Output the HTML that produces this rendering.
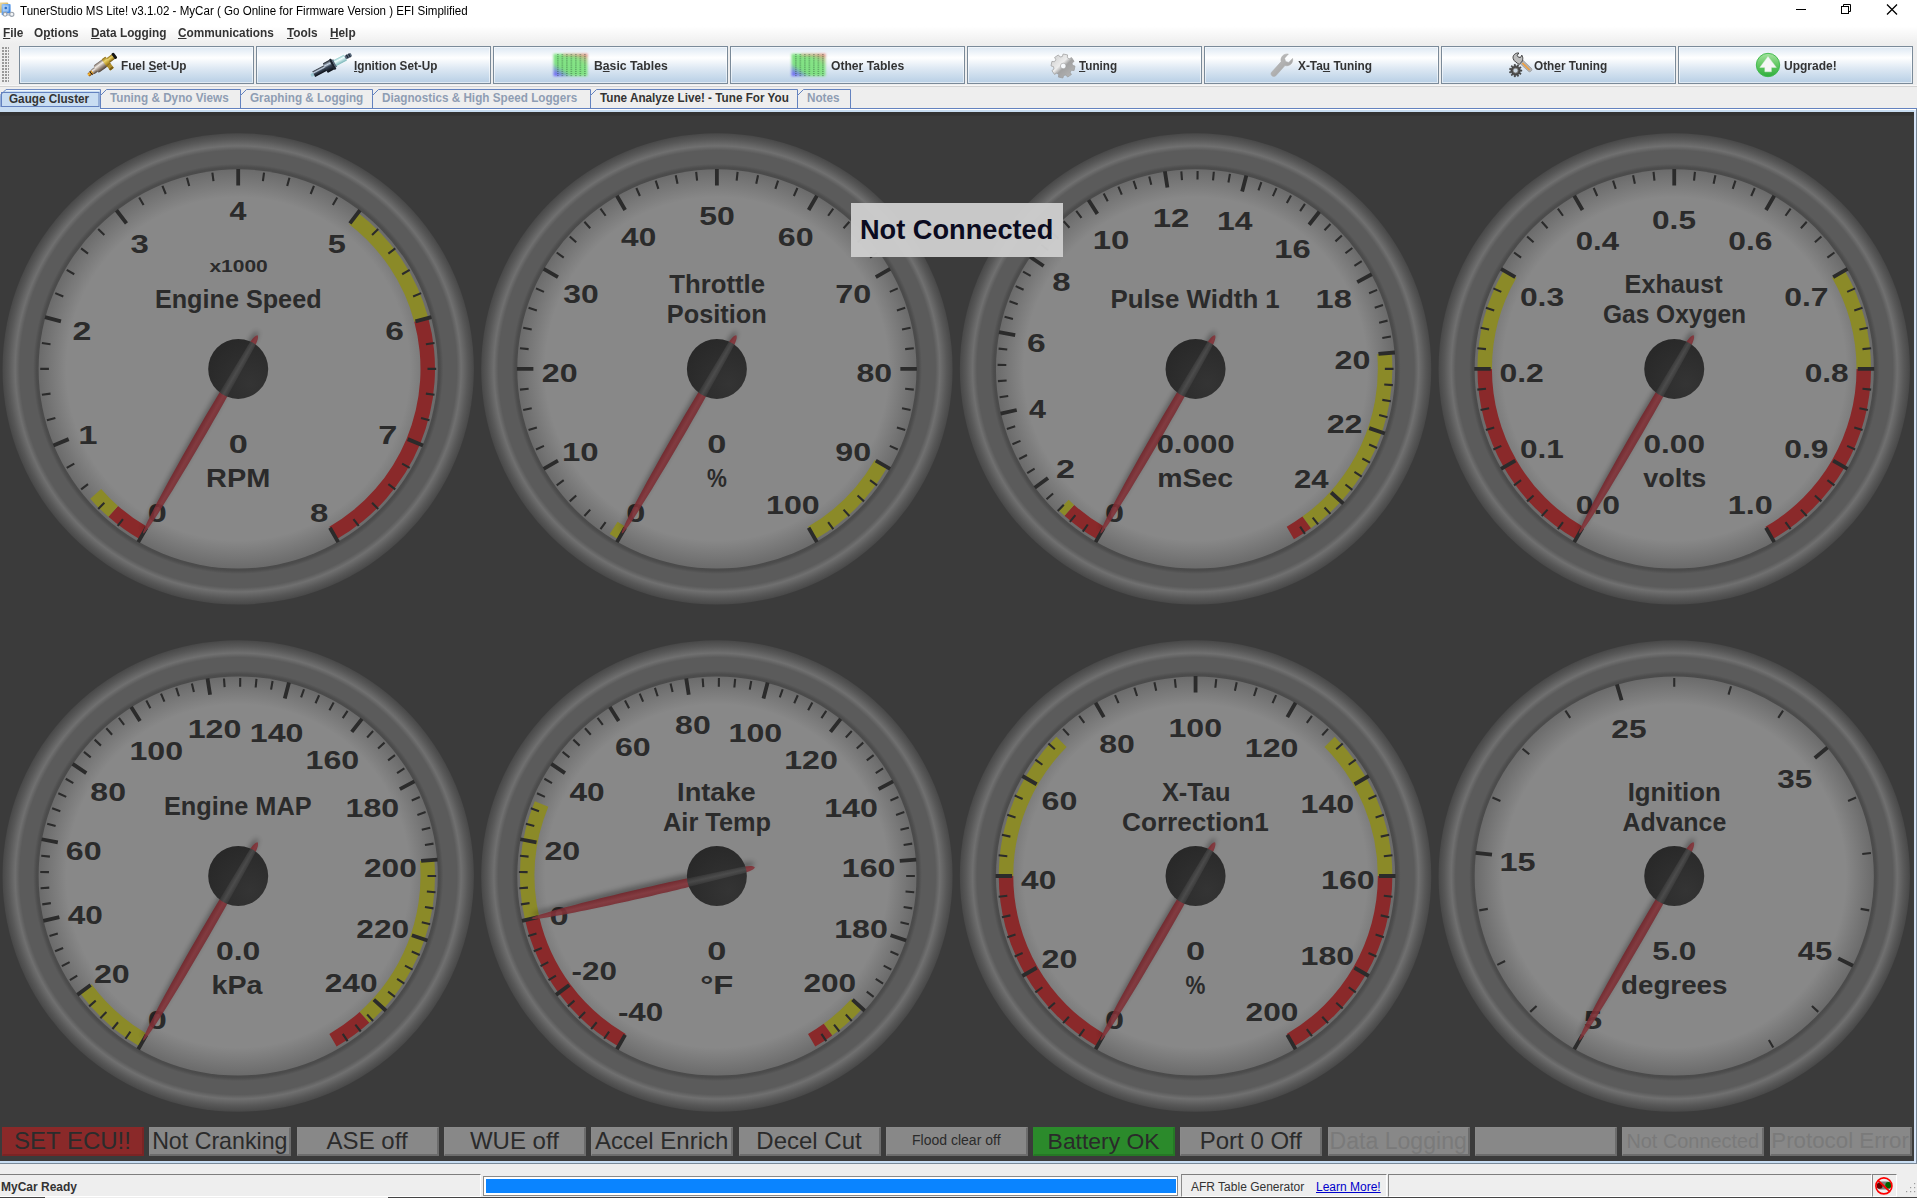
<!DOCTYPE html><html><head><meta charset="utf-8"><title>TunerStudio MS Lite!</title><style>
*{box-sizing:border-box;margin:0;padding:0}
html,body{width:1917px;height:1198px;overflow:hidden;background:#eeeeee;font-family:"Liberation Sans", sans-serif;}
body{position:relative}
.abs{position:absolute}
#titlebar{left:0;top:0;width:1917px;height:22px;background:#fff}
#title{left:20px;top:4.3px;font-size:12.3px;color:#000;white-space:nowrap;transform:scaleX(.9407);transform-origin:0 0}
#menubar{left:0;top:22px;width:1917px;height:22px;background:linear-gradient(#ffffff,#ffffff 20%,#eeeeee)}
.menu{top:26px;font-size:12px;font-weight:bold;color:#333;white-space:nowrap;transform:scaleX(.985);transform-origin:0 0}
.menu u{text-decoration:underline}
.tbtn{top:46px;height:38px;width:235px;border:1px solid #7a8a99;background:linear-gradient(#dde8f3 0%,#ffffff 30%,#dde8f3 60%,#b8cfe5 100%);box-shadow:inset 0 0 0 1px rgba(255,255,255,.55)}
.tbtn span{position:absolute;top:12px;font-size:12px;font-weight:bold;color:#333;white-space:nowrap;transform:scaleX(.972);transform-origin:0 0}
.tab{top:90px;height:18px;font-size:12px;font-weight:bold;color:#8e9db3;white-space:nowrap}
.tab span{position:absolute;top:1px}
#panel{left:0;top:112px;width:1914px;height:1048.7px;background:#3b3b3b;overflow:hidden;box-shadow:inset 0 3.5px 0 #333}
.ind{top:1127px;height:29px;width:142px;background:#888888;border-top:1px solid #8a8a8a;border-left:1px solid #8a8a8a;border-right:2px solid #6c6c6c;border-bottom:2px solid #6c6c6c;color:#2b2b2b;font-size:24px;text-align:center;white-space:nowrap;line-height:25px;overflow:hidden}
.ind.dis{color:#7a7a7a}
.sb{top:1174.2px;height:22.8px;border:1px solid;border-top-width:1.3px;border-color:#7e7e7e #fff #fff #8a8a8a;font-size:12px;color:#333;white-space:nowrap}
</style></head><body>
<div id="titlebar" class="abs"></div>
<svg class="abs" style="left:0;top:0" width="18" height="20" viewBox="0 0 18 20">
<defs><linearGradient id="fold" x1="0" y1="0" x2="1" y2="1"><stop offset="0" stop-color="#f0dca0"/><stop offset="1" stop-color="#c39a40"/></linearGradient>
<linearGradient id="docg" x1="0" y1="0" x2="1" y2="1"><stop offset="0" stop-color="#9cc6f6"/><stop offset=".5" stop-color="#5a9ae8"/><stop offset="1" stop-color="#2f78d8"/></linearGradient>
<filter id="ib" x="-20%" y="-20%" width="140%" height="140%"><feGaussianBlur stdDeviation=".35"/></filter></defs>
<g filter="url(#ib)"><rect x="-1" y="2.4" width="9.2" height="10.4" rx="1" fill="url(#fold)"/>
<rect x="1.6" y="4" width="9" height="11.2" rx="1" fill="url(#docg)"/>
<rect x="2.8" y="5.4" width="5.8" height="6.2" fill="#b4d4f8" opacity=".75"/>
<circle cx="5.8" cy="8" r="1.3" fill="#2a6cc4"/>
<rect x="6" y="13.1" width="5" height="2.4" fill="#c8ccd2"/>
<circle cx="5.1" cy="14.3" r="1.9" fill="#f4f6f8" stroke="#9aa2ac" stroke-width="1.1"/>
<circle cx="11.8" cy="14.3" r="2.1" fill="#f4f6f8" stroke="#9aa2ac" stroke-width="1.1"/></g></svg>
<div id="title" class="abs">TunerStudio MS Lite! v3.1.02 - MyCar ( Go Online for Firmware Version ) EFI Simplified</div>
<svg class="abs" style="left:1780px;top:0" width="137" height="22" viewBox="0 0 137 22" fill="none" stroke="#000" stroke-width="1">
<path d="M16,9.5H26"/><rect x="61.5" y="6.5" width="7" height="7"/><path d="M63.5,6.5V4.5H70.5V11.5H68.5"/>
<path d="M107,4.5L117,14.5M117,4.5L107,14.5" stroke-width="1.25"/></svg>
<div id="menubar" class="abs"></div>
<div class="abs menu" style="left:3px"><u>F</u>ile</div>
<div class="abs menu" style="left:34px">O<u>p</u>tions</div>
<div class="abs menu" style="left:91px"><u>D</u>ata Logging</div>
<div class="abs menu" style="left:178px"><u>C</u>ommunications</div>
<div class="abs menu" style="left:287px"><u>T</u>ools</div>
<div class="abs menu" style="left:330px"><u>H</u>elp</div>
<div class="abs" style="left:2px;top:47px;width:7px;height:36px;background-image:radial-gradient(circle at 1px 1px,#9a9a9a 0.8px,transparent 1px);background-size:3px 3px"></div>
<div class="abs tbtn" style="left:19px"><span style="left:101.44px;transform:scaleX(0.9801)">Fuel <u>S</u>et-Up</span><svg class="abs" style="left:64.9px;top:5px" width="36" height="28" viewBox="0 0 36 28">
<defs><linearGradient id="fsil" x1="0" y1="0" x2="0" y2="1"><stop offset="0" stop-color="#6e625a"/><stop offset=".3" stop-color="#f2ece6"/><stop offset=".6" stop-color="#a89a8e"/><stop offset="1" stop-color="#4a3e36"/></linearGradient>
<linearGradient id="fbra" x1="0" y1="0" x2="0" y2="1"><stop offset="0" stop-color="#8a6a14"/><stop offset=".35" stop-color="#ecd46a"/><stop offset=".7" stop-color="#b8962a"/><stop offset="1" stop-color="#6a4e10"/></linearGradient>
<linearGradient id="ftip" x1="0" y1="0" x2="0" y2="1"><stop offset="0" stop-color="#a85a08"/><stop offset=".4" stop-color="#ffc030"/><stop offset="1" stop-color="#7a3a04"/></linearGradient></defs>
<g transform="translate(3.2 23.2) rotate(-36.5)">
<rect x="0" y="-1.9" width="3.2" height="3.8" rx="1.2" fill="url(#ftip)"/>
<rect x="3" y="-2.3" width="1.3" height="4.6" fill="#2a1a08"/>
<rect x="4.2" y="-2.2" width="1.4" height="4.4" fill="url(#ftip)"/>
<rect x="5.5" y="-2.8" width="5" height="5.6" rx=".8" fill="url(#fsil)"/>
<rect x="9.5" y="-4.5" width="11.5" height="9" rx="1.8" fill="url(#fsil)"/>
<rect x="20" y="-4.8" width="5" height="9.6" rx=".8" fill="url(#fbra)"/>
<rect x="20.4" y="3.8" width="4.6" height="5.6" rx=".8" fill="#b08e2c"/>
<rect x="20.4" y="7.4" width="4.6" height="2" rx=".8" fill="#7a5e16"/>
<rect x="24.8" y="-2.8" width="6.6" height="5.6" fill="url(#fbra)"/>
<rect x="31" y="-3.4" width="3" height="6.8" rx="1.2" fill="#161616"/>
</g></svg></div>
<div class="abs tbtn" style="left:256px"><span style="left:97.34px;transform:scaleX(0.9767)"><u>I</u>gnition Set-Up</span><svg class="abs" style="left:50.80000000000001px;top:5px" width="46" height="28" viewBox="0 0 46 28">
<defs><linearGradient id="sst" x1="0" y1="0" x2="0" y2="1"><stop offset="0" stop-color="#10161e"/><stop offset=".3" stop-color="#c8d6e6"/><stop offset=".5" stop-color="#3a4656"/><stop offset="1" stop-color="#080c12"/></linearGradient>
<linearGradient id="scer" x1="0" y1="0" x2="0" y2="1"><stop offset="0" stop-color="#8ec8c8"/><stop offset=".35" stop-color="#f0ffff"/><stop offset="1" stop-color="#7ab6b8"/></linearGradient></defs>
<g transform="translate(3.0 23.6) rotate(-27.7) scale(1.03 1)">
<rect x="0" y="-1.6" width="3.5" height="3.2" rx="1" fill="#9cc8d2"/>
<rect x="3" y="-3.1" width="13.5" height="6.2" fill="url(#sst)"/>
<rect x="15.5" y="-5.4" width="7.5" height="10.8" rx="1" fill="url(#sst)"/>
<rect x="22.6" y="-6" width="2.4" height="12" rx="1" fill="#1a222c"/>
<rect x="24.6" y="-4.2" width="2" height="8.4" fill="#5a6a7a"/>
<rect x="26.2" y="-3.2" width="11.5" height="6.4" fill="url(#scer)"/>
<rect x="37.4" y="-2" width="6.8" height="4" rx="1" fill="#58687a"/>
<rect x="39.2" y="-2" width="1.1" height="4" fill="#1c2430"/><rect x="41.6" y="-2" width="1.1" height="4" fill="#1c2430"/>
</g></svg></div>
<div class="abs tbtn" style="left:493px"><span style="left:99.51px;transform:scaleX(1.0166)">B<u>a</u>sic Tables</span><svg class="abs" style="left:55.40px;top:2.2px" width="42" height="30" viewBox="0 0 42 30">
<defs><linearGradient id="tga1" x1="0" y1="1" x2="1" y2="0"><stop offset="0" stop-color="#6a68f6"/><stop offset=".09" stop-color="#7674f2"/><stop offset=".3" stop-color="#7fe083"/><stop offset=".7" stop-color="#86e486"/><stop offset=".86" stop-color="#b0c88a"/><stop offset="1" stop-color="#f08484"/></linearGradient>
<linearGradient id="tgb1" x1="0" y1="0" x2="0" y2="1"><stop offset="0" stop-color="#e88a80" stop-opacity=".7"/><stop offset=".16" stop-color="#e88a80" stop-opacity="0"/></linearGradient>
<linearGradient id="tgc1" x1="0" y1="0" x2="1" y2="0"><stop offset="0" stop-color="#fff" stop-opacity="1"/><stop offset=".5" stop-color="#fff" stop-opacity="0"/></linearGradient>
<filter id="tbl1" x="-20%" y="-20%" width="140%" height="140%"><feGaussianBlur stdDeviation="1.2"/></filter></defs>
<g filter="url(#tbl1)"><rect x="4.5" y="4.8" width="34" height="22.4" fill="url(#tga1)"/><rect x="14" y="4.8" width="24.5" height="22.4" fill="url(#tgb1)"/></g><path d="M8.0,5.6h1.7M8.0,7.7h1.7M8.0,9.8h1.7M8.0,11.9h1.7M8.0,14.0h1.7M8.0,16.1h1.7M8.0,18.2h1.7M8.0,20.3h1.7M8.0,22.4h1.7M8.0,24.5h1.7M8.0,26.6h1.7M12.5,5.6h1.7M12.5,7.7h1.7M12.5,9.8h1.7M12.5,11.9h1.7M12.5,14.0h1.7M12.5,16.1h1.7M12.5,18.2h1.7M12.5,20.3h1.7M12.5,22.4h1.7M12.5,24.5h1.7M12.5,26.6h1.7M17.0,5.6h1.7M17.0,7.7h1.7M17.0,9.8h1.7M17.0,11.9h1.7M17.0,14.0h1.7M17.0,16.1h1.7M17.0,18.2h1.7M17.0,20.3h1.7M17.0,22.4h1.7M17.0,24.5h1.7M17.0,26.6h1.7M21.5,5.6h1.7M21.5,7.7h1.7M21.5,9.8h1.7M21.5,11.9h1.7M21.5,14.0h1.7M21.5,16.1h1.7M21.5,18.2h1.7M21.5,20.3h1.7M21.5,22.4h1.7M21.5,24.5h1.7M21.5,26.6h1.7M26.0,5.6h1.7M26.0,7.7h1.7M26.0,9.8h1.7M26.0,11.9h1.7M26.0,14.0h1.7M26.0,16.1h1.7M26.0,18.2h1.7M26.0,20.3h1.7M26.0,22.4h1.7M26.0,24.5h1.7M26.0,26.6h1.7M30.5,5.6h1.7M30.5,7.7h1.7M30.5,9.8h1.7M30.5,11.9h1.7M30.5,14.0h1.7M30.5,16.1h1.7M30.5,18.2h1.7M30.5,20.3h1.7M30.5,22.4h1.7M30.5,24.5h1.7M30.5,26.6h1.7M35.0,5.6h1.7M35.0,7.7h1.7M35.0,9.8h1.7M35.0,11.9h1.7M35.0,14.0h1.7M35.0,16.1h1.7M35.0,18.2h1.7M35.0,20.3h1.7M35.0,22.4h1.7M35.0,24.5h1.7M35.0,26.6h1.7" stroke="#20402c" stroke-width=".8" opacity=".5"/></svg></div>
<div class="abs tbtn" style="left:730px"><span style="left:100.07px;transform:scaleX(1.0095)">Othe<u>r</u> Tables</span><svg class="abs" style="left:55.65px;top:2.2px" width="42" height="30" viewBox="0 0 42 30">
<defs><linearGradient id="tga2" x1="0" y1="1" x2="1" y2="0"><stop offset="0" stop-color="#6a68f6"/><stop offset=".09" stop-color="#7674f2"/><stop offset=".3" stop-color="#7fe083"/><stop offset=".7" stop-color="#86e486"/><stop offset=".86" stop-color="#b0c88a"/><stop offset="1" stop-color="#f08484"/></linearGradient>
<linearGradient id="tgb2" x1="0" y1="0" x2="0" y2="1"><stop offset="0" stop-color="#e88a80" stop-opacity=".7"/><stop offset=".16" stop-color="#e88a80" stop-opacity="0"/></linearGradient>
<linearGradient id="tgc2" x1="0" y1="0" x2="1" y2="0"><stop offset="0" stop-color="#fff" stop-opacity="1"/><stop offset=".5" stop-color="#fff" stop-opacity="0"/></linearGradient>
<filter id="tbl2" x="-20%" y="-20%" width="140%" height="140%"><feGaussianBlur stdDeviation="1.2"/></filter></defs>
<g filter="url(#tbl2)"><rect x="4.5" y="4.8" width="34" height="22.4" fill="url(#tga2)"/><rect x="14" y="4.8" width="24.5" height="22.4" fill="url(#tgb2)"/></g><path d="M8.0,5.6h1.7M8.0,7.7h1.7M8.0,9.8h1.7M8.0,11.9h1.7M8.0,14.0h1.7M8.0,16.1h1.7M8.0,18.2h1.7M8.0,20.3h1.7M8.0,22.4h1.7M8.0,24.5h1.7M8.0,26.6h1.7M12.5,5.6h1.7M12.5,7.7h1.7M12.5,9.8h1.7M12.5,11.9h1.7M12.5,14.0h1.7M12.5,16.1h1.7M12.5,18.2h1.7M12.5,20.3h1.7M12.5,22.4h1.7M12.5,24.5h1.7M12.5,26.6h1.7M17.0,5.6h1.7M17.0,7.7h1.7M17.0,9.8h1.7M17.0,11.9h1.7M17.0,14.0h1.7M17.0,16.1h1.7M17.0,18.2h1.7M17.0,20.3h1.7M17.0,22.4h1.7M17.0,24.5h1.7M17.0,26.6h1.7M21.5,5.6h1.7M21.5,7.7h1.7M21.5,9.8h1.7M21.5,11.9h1.7M21.5,14.0h1.7M21.5,16.1h1.7M21.5,18.2h1.7M21.5,20.3h1.7M21.5,22.4h1.7M21.5,24.5h1.7M21.5,26.6h1.7M26.0,5.6h1.7M26.0,7.7h1.7M26.0,9.8h1.7M26.0,11.9h1.7M26.0,14.0h1.7M26.0,16.1h1.7M26.0,18.2h1.7M26.0,20.3h1.7M26.0,22.4h1.7M26.0,24.5h1.7M26.0,26.6h1.7M30.5,5.6h1.7M30.5,7.7h1.7M30.5,9.8h1.7M30.5,11.9h1.7M30.5,14.0h1.7M30.5,16.1h1.7M30.5,18.2h1.7M30.5,20.3h1.7M30.5,22.4h1.7M30.5,24.5h1.7M30.5,26.6h1.7M35.0,5.6h1.7M35.0,7.7h1.7M35.0,9.8h1.7M35.0,11.9h1.7M35.0,14.0h1.7M35.0,16.1h1.7M35.0,18.2h1.7M35.0,20.3h1.7M35.0,22.4h1.7M35.0,24.5h1.7M35.0,26.6h1.7" stroke="#20402c" stroke-width=".8" opacity=".5"/></svg></div>
<div class="abs tbtn" style="left:967px"><span style="left:111.08px;transform:scaleX(0.9722)"><u>T</u>uning</span><svg class="abs" style="left:81.50000000000009px;top:5.5px" width="26" height="26" viewBox="0 0 26 26"><defs><linearGradient id="gg" x1="0" y1="0" x2="1" y2="1"><stop offset="0" stop-color="#c9c9c9"/><stop offset=".42" stop-color="#ececec"/><stop offset=".55" stop-color="#a2a2a2"/><stop offset="1" stop-color="#b9b9b9"/></linearGradient></defs>
<polygon points="22.48,12.34 25.00,13.12 24.10,17.56 21.47,17.30 20.17,19.23 21.40,21.57 17.62,24.07 15.95,22.03 13.66,22.48 12.88,25.00 8.44,24.10 8.70,21.47 6.77,20.17 4.43,21.40 1.93,17.62 3.97,15.95 3.52,13.66 1.00,12.88 1.90,8.44 4.53,8.70 5.83,6.77 4.60,4.43 8.38,1.93 10.05,3.97 12.34,3.52 13.12,1.00 17.56,1.90 17.30,4.53 19.23,5.83 21.57,4.60 24.07,8.38 22.03,10.05" fill="url(#gg)" stroke="#9a9a9a" stroke-width=".7" stroke-linejoin="round"/><circle cx="13.2" cy="13" r="2.8" fill="#f6f9fc" stroke="#9c9c9c" stroke-width=".6"/></svg></div>
<div class="abs tbtn" style="left:1204px"><span style="left:93.28px;transform:scaleX(0.9895)">X-Ta<u>u</u> Tuning</span><svg class="abs" style="left:64.10px;top:4.6px" width="26" height="26" viewBox="0 0 26 26"><defs><linearGradient id="wg" x1="0" y1="0" x2="1" y2="1"><stop offset="0" stop-color="#c4c4c4"/><stop offset="1" stop-color="#9c9c9c"/></linearGradient></defs>
<path d="M2.6,20.2 L12.2,9.6 C11,5.6 14.2,1.4 19.4,2 L15.6,6.2 L16.6,9.6 L19.8,10.4 L23.6,6.4 C24.6,11 20.6,14.8 16,13.6 L6.8,23.8 C4.2,26 0.6,22.8 2.6,20.2 Z" fill="url(#wg)" stroke="#a8a8a8" stroke-width=".5"/></svg></div>
<div class="abs tbtn" style="left:1441px"><span style="left:92.03px;transform:scaleX(0.9844)">Oth<u>e</u>r Tuning</span><svg class="abs" style="left:67.00px;top:5.2px" width="26" height="26" viewBox="0 0 26 26">
<path d="M10.6,11.2 L13.8,8 L22.6,16.6 C23.8,18 21.2,20.6 19.8,19.6 Z" fill="#b4b4b4" stroke="#8e8e8e" stroke-width=".6"/>
<path d="M13.4,11 L20.6,18" stroke="#f0a040" stroke-width="1.7" fill="none"/>
<path d="M4.2,6.6 C3.2,3.4 6.6,0.6 9.8,1 L8.2,3.4 L9.4,5.2 L11.6,5.4 L12.8,3.2 C14.8,6 13.4,9.8 11.8,10.8 L10.2,12.4 C8,11 5,9.4 4.2,6.6Z" fill="#bdbdbd" stroke="#3a3a3a" stroke-width="1"/>
<polygon points="11.14,17.87 12.87,17.97 12.87,19.23 11.14,19.33 10.82,20.44 12.21,21.46 11.53,22.52 10.02,21.67 9.15,22.43 9.78,24.04 8.63,24.56 7.82,23.04 6.68,23.20 6.33,24.89 5.09,24.72 5.23,22.99 4.18,22.51 2.97,23.75 2.02,22.93 3.07,21.55 2.45,20.58 0.76,20.97 0.41,19.76 2.04,19.18 2.04,18.02 0.41,17.44 0.76,16.23 2.45,16.62 3.07,15.65 2.02,14.27 2.97,13.45 4.18,14.69 5.23,14.21 5.09,12.48 6.33,12.31 6.68,14.00 7.82,14.16 8.63,12.64 9.78,13.16 9.15,14.77 10.02,15.53 11.53,14.68 12.21,15.74 10.82,16.76" fill="#4a4a4a" stroke="#2c2c2c" stroke-width=".5"/><circle cx="6.6" cy="18.6" r="2.4" fill="#c9d6e2" stroke="#8a8a8a" stroke-width=".8"/></svg></div>
<div class="abs tbtn" style="left:1678px"><span style="left:104.78px;transform:scaleX(0.9996)">Upgrade!</span><svg class="abs" style="left:76.00px;top:5.2px" width="26" height="26" viewBox="0 0 26 26"><defs><linearGradient id="ug" x1="0" y1="0" x2="0" y2="1"><stop offset="0" stop-color="#a6e3a0"/><stop offset=".5" stop-color="#62c862"/><stop offset="1" stop-color="#2fae3c"/></linearGradient></defs>
<circle cx="13" cy="13" r="11.7" fill="url(#ug)" stroke="#3cb84a" stroke-width=".9"/><path d="M13,4.4 L21.4,15.4 L16.4,15.4 L16.4,19.8 L9.8,19.8 L9.8,15.4 L4.8,15.4Z" fill="#f6f6f6" stroke="#e0eee0" stroke-width=".4"/></svg></div>
<div class="abs" style="left:0;top:85px;width:1917px;height:1px;background:#f7f7f7"></div><div class="abs" style="left:0;top:86px;width:1917px;height:1px;background:#d2d2d2"></div>
<svg class="abs" style="left:0;top:86px" width="1917" height="26" viewBox="0 0 1917 26"><style>.tt{font-family:"Liberation Sans",sans-serif;font-weight:bold;font-size:12px}</style><path d="M0.0,22.5 L0.0,9.5 L6.0,3.5 L100.5,3.5 L100.5,22.5" fill="#c8ddf2" stroke="#6382bf" stroke-width="1"/><path d="M6.0,4.4 L99.5,4.4" stroke="#fff" stroke-width="0.8" fill="none"/><rect x="1.5" y="6.5" width="97.5" height="14.0" fill="none" stroke="#6382bf" stroke-width="1"/><text transform="translate(9.0 17) scale(.977 1)" class="tt" fill="#333">Gauge Cluster</text><path d="M100.5,22.5 L100.5,9.5 L106.5,3.5 L240.5,3.5 L240.5,22.5" fill="#eeeeee" stroke="#6382bf" stroke-width="1"/><text transform="translate(110 16) scale(.977 1)" class="tt" fill="#8e9db3">Tuning &amp; Dyno Views</text><path d="M240.5,22.5 L240.5,9.5 L246.5,3.5 L372.5,3.5 L372.5,22.5" fill="#eeeeee" stroke="#6382bf" stroke-width="1"/><text transform="translate(250 16) scale(.977 1)" class="tt" fill="#8e9db3">Graphing &amp; Logging</text><path d="M372.5,22.5 L372.5,9.5 L378.5,3.5 L590.5,3.5 L590.5,22.5" fill="#eeeeee" stroke="#6382bf" stroke-width="1"/><text transform="translate(382 16) scale(.977 1)" class="tt" fill="#8e9db3">Diagnostics &amp; High Speed Loggers</text><path d="M590.5,22.5 L590.5,9.5 L596.5,3.5 L797.5,3.5 L797.5,22.5" fill="#eeeeee" stroke="#6382bf" stroke-width="1"/><text transform="translate(600 16) scale(.977 1)" class="tt" fill="#333">Tune Analyze Live! - Tune For You</text><path d="M797.5,22.5 L797.5,9.5 L803.5,3.5 L850.5,3.5 L850.5,22.5" fill="#eeeeee" stroke="#6382bf" stroke-width="1"/><text transform="translate(807 16) scale(.977 1)" class="tt" fill="#8e9db3">Notes</text></svg>
<div class="abs" style="left:0;top:108px;width:1917px;height:56px;background:#c8ddf2;border-top:1px solid #6382bf"></div>
<div class="abs" style="left:0;top:109px;width:1916px;height:1px;background:#fff"></div>
<div class="abs" style="left:0;top:107px;width:100px;height:3px;background:#c8ddf2"></div>
<div class="abs" style="left:0;top:1160px;width:1917px;height:3px;background:#c8ddf2"></div>
<div class="abs" style="left:0;top:1163px;width:1917px;height:1px;background:#7a8a99"></div>
<div class="abs" style="left:1914px;top:110px;width:2px;height:1053px;background:#d8e7fb"></div>
<div class="abs" style="left:1916px;top:109px;width:1px;height:1055px;background:#7a8a99"></div>
<div id="panel" class="abs"><svg id="gsvg" width="1914" height="1048" viewBox="0 0 1914 1048" style="position:absolute;left:0;top:0">
<style>
 #gsvg text{font-family:"Liberation Sans", sans-serif;font-weight:bold;fill:#2b2b2b;text-anchor:middle}
</style>

<defs>
<radialGradient id="bezel" cx="50%" cy="50%" r="50%">
 <stop offset="0" stop-color="#4a4a4a"/>
 <stop offset="0.846" stop-color="#4a4a4a"/>
 <stop offset="0.856" stop-color="#4c4c4c"/>
 <stop offset="0.870" stop-color="#5b5b5b"/>
 <stop offset="0.927" stop-color="#5b5b5b"/>
 <stop offset="0.946" stop-color="#707070"/>
 <stop offset="0.975" stop-color="#585858"/>
 <stop offset="1" stop-color="#484848"/>
</radialGradient>
<radialGradient id="face" cx="50%" cy="50%" r="50%">
 <stop offset="0" stop-color="#888888"/>
 <stop offset="0.86" stop-color="#888888"/>
 <stop offset="1" stop-color="#6b6b6b"/>
</radialGradient>
<radialGradient id="hub" cx="70%" cy="75%" r="90%">
 <stop offset="0" stop-color="#343434"/>
 <stop offset="1" stop-color="#272727"/>
</radialGradient>
<linearGradient id="ngrad" x1="0" y1="0" x2="0" y2="1">
 <stop offset="0" stop-color="#782a30"/>
 <stop offset="0.45" stop-color="#86353b"/>
 <stop offset="1" stop-color="#74242a"/>
</linearGradient>
<linearGradient id="nhl" x1="0" y1="0" x2="0" y2="1">
 <stop offset="0" stop-color="#fff" stop-opacity="0.04"/>
 <stop offset="0.5" stop-color="#fff" stop-opacity="0.14"/>
 <stop offset="1" stop-color="#fff" stop-opacity="0.04"/>
</linearGradient>
<filter id="blur" x="-20%" y="-200%" width="140%" height="500%"><feGaussianBlur stdDeviation="2.8"/></filter>
<clipPath id="hubclip"><circle cx="0" cy="0" r="30"/></clipPath>
<path id="needle" d="M-39,0 C-37,-2.8 -31,-3.2 -20,-3.4 L30,-4.4 C70,-5.4 190,-4.4 190,0 C190,4.4 70,5.4 30,4.4 L-20,3.4 C-31,3.2 -37,2.8 -39,0Z"/>
<circle id="facebg" cx="0" cy="0" r="199.6" fill="url(#face)"/>
</defs>

<g>
<circle cx="238.20" cy="256.90" r="235.7" fill="url(#bezel)" transform="translate(238.20 256.90) scale(1) translate(-238.20 -256.90)"/>
<use href="#facebg" x="238.20" y="256.90"/>
<path d="M139.80,427.33 A196.8,196.8 0 0 1 108.44,404.86 L118.00,393.96 A182.3,182.3 0 0 0 147.05,414.78 Z" fill="#8a292a"/>
<path d="M108.44,404.86 A196.8,196.8 0 0 1 90.24,386.66 L101.14,377.10 A182.3,182.3 0 0 0 118.00,393.96 Z" fill="#8b8a28"/>
<path d="M358.00,100.77 A196.8,196.8 0 0 1 428.29,205.96 L414.29,209.72 A182.3,182.3 0 0 0 349.18,112.27 Z" fill="#8b8a28"/>
<path d="M428.29,205.96 A196.8,196.8 0 0 1 336.60,427.33 L329.35,414.78 A182.3,182.3 0 0 0 414.29,209.72 Z" fill="#8a292a"/>
<path d="M138.20,430.11L146.45,415.82M53.42,333.44L68.67,327.12M45.01,205.14L60.95,209.41M116.45,98.23L126.49,111.32M238.20,56.90L238.20,73.40M359.95,98.23L349.91,111.32M431.39,205.14L415.45,209.41M422.98,333.44L407.73,327.12M338.20,430.11L329.95,415.82" stroke="#2b2b2b" stroke-width="3.8" fill="none"/>
<path d="M117.67,413.98L122.96,407.08M98.19,396.91L104.34,390.76M81.12,377.43L88.02,372.14M66.73,355.90L74.26,351.55M46.95,308.15L55.35,305.89M41.89,282.74L50.52,281.61M40.20,256.90L48.90,256.90M41.89,231.06L50.52,232.19M55.27,181.13L63.31,184.46M66.73,157.90L74.26,162.25M81.12,136.37L88.02,141.66M98.19,116.89L104.34,123.04M139.20,85.43L143.55,92.96M162.43,73.97L165.76,82.01M186.95,65.65L189.21,74.05M212.36,60.59L213.49,69.22M264.04,60.59L262.91,69.22M289.45,65.65L287.19,74.05M313.97,73.97L310.64,82.01M337.20,85.43L332.85,92.96M378.21,116.89L372.06,123.04M395.28,136.37L388.38,141.66M409.67,157.90L402.14,162.25M421.13,181.13L413.09,184.46M434.51,231.06L425.88,232.19M436.20,256.90L427.50,256.90M434.51,282.74L425.88,281.61M429.45,308.15L421.05,305.89M409.67,355.90L402.14,351.55M395.28,377.43L388.38,372.14M378.21,396.91L372.06,390.76M358.73,413.98L353.44,407.08" stroke="#2b2b2b" stroke-width="2.1" fill="none"/>
<text x="157.22" y="410.30" font-size="25.5" textLength="19.09" lengthAdjust="spacingAndGlyphs">0</text>
<text x="87.94" y="331.99" font-size="25.5" textLength="19.29" lengthAdjust="spacingAndGlyphs">1</text>
<text x="81.82" y="228.07" font-size="25.5" textLength="18.89" lengthAdjust="spacingAndGlyphs">2</text>
<text x="139.76" y="141.48" font-size="25.5" textLength="18.31" lengthAdjust="spacingAndGlyphs">3</text>
<text x="238.07" y="108.00" font-size="25.5" textLength="16.95" lengthAdjust="spacingAndGlyphs">4</text>
<text x="336.76" y="141.48" font-size="25.5" textLength="18.13" lengthAdjust="spacingAndGlyphs">5</text>
<text x="394.70" y="228.07" font-size="25.5" textLength="18.69" lengthAdjust="spacingAndGlyphs">6</text>
<text x="387.89" y="331.99" font-size="25.5" textLength="19.09" lengthAdjust="spacingAndGlyphs">7</text>
<text x="319.22" y="410.30" font-size="25.5" textLength="18.31" lengthAdjust="spacingAndGlyphs">8</text>
<text x="238.23" y="195.80" font-size="25.5" textLength="166.64" lengthAdjust="spacingAndGlyphs">Engine Speed</text>
<text x="238.58" y="159.50" font-size="16" textLength="58.36" lengthAdjust="spacingAndGlyphs">x1000</text>
<text x="238.22" y="340.70" font-size="25.5" textLength="19.09" lengthAdjust="spacingAndGlyphs">0</text>
<text x="238.23" y="375.00" font-size="25.5" textLength="64.33" lengthAdjust="spacingAndGlyphs">RPM</text>
<use href="#needle" transform="translate(238.20 252.90) rotate(120.00)" fill="#000" opacity="0.32" filter="url(#blur)"/>
<use href="#needle" transform="translate(238.20 256.90) rotate(120.00)" fill="url(#ngrad)" opacity="0.88"/>
<circle cx="238.20" cy="256.90" r="30" fill="url(#hub)"/>
<g clip-path="url(#hubclip)" transform="translate(238.20 256.90)"><use href="#needle" transform="rotate(120.00)" fill="url(#nhl)"/></g>
</g>
<g>
<circle cx="716.88" cy="256.90" r="235.7" fill="url(#bezel)" transform="translate(716.88 256.90) scale(1) translate(-716.88 -256.90)"/>
<use href="#facebg" x="716.88" y="256.90"/>
<path d="M618.48,427.33 A196.8,196.8 0 0 1 609.70,421.95 L617.59,409.79 A182.3,182.3 0 0 0 625.73,414.78 Z" fill="#8b8a28"/>
<path d="M887.31,355.30 A196.8,196.8 0 0 1 815.28,427.33 L808.03,414.78 A182.3,182.3 0 0 0 874.76,348.05 Z" fill="#8b8a28"/>
<path d="M616.88,430.11L625.13,415.82M543.67,356.90L557.96,348.65M516.88,256.90L533.38,256.90M543.67,156.90L557.96,165.15M616.88,83.69L625.13,97.98M716.88,56.90L716.88,73.40M816.88,83.69L808.63,97.98M890.09,156.90L875.80,165.15M916.88,256.90L900.38,256.90M890.09,356.90L875.80,348.65M816.88,430.11L808.63,415.82" stroke="#2b2b2b" stroke-width="3.8" fill="none"/>
<path d="M600.50,417.09L605.61,410.05M584.39,404.04L590.21,397.58M569.74,389.39L576.20,383.57M556.69,373.28L563.73,368.17M536.00,337.43L543.95,333.90M528.57,318.09L536.85,315.40M523.21,298.07L531.72,296.26M519.96,277.60L528.62,276.69M519.96,236.20L528.62,237.11M523.21,215.73L531.72,217.54M528.57,195.71L536.85,198.40M536.00,176.37L543.95,179.90M556.69,140.52L563.73,145.63M569.74,124.41L576.20,130.23M584.39,109.76L590.21,116.22M600.50,96.71L605.61,103.75M636.35,76.02L639.88,83.97M655.69,68.59L658.38,76.87M675.71,63.23L677.52,71.74M696.18,59.98L697.09,68.64M737.58,59.98L736.67,68.64M758.05,63.23L756.24,71.74M778.07,68.59L775.38,76.87M797.41,76.02L793.88,83.97M833.26,96.71L828.15,103.75M849.37,109.76L843.55,116.22M864.02,124.41L857.56,130.23M877.07,140.52L870.03,145.63M897.76,176.37L889.81,179.90M905.19,195.71L896.91,198.40M910.55,215.73L902.04,217.54M913.80,236.20L905.14,237.11M913.80,277.60L905.14,276.69M910.55,298.07L902.04,296.26M905.19,318.09L896.91,315.40M897.76,337.43L889.81,333.90M877.07,373.28L870.03,368.17M864.02,389.39L857.56,383.57M849.37,404.04L843.55,397.58M833.26,417.09L828.15,410.05" stroke="#2b2b2b" stroke-width="2.1" fill="none"/>
<text x="635.90" y="410.30" font-size="25.5" textLength="19.09" lengthAdjust="spacingAndGlyphs">0</text>
<text x="580.36" y="348.65" font-size="25.5" textLength="36.67" lengthAdjust="spacingAndGlyphs">10</text>
<text x="559.70" y="270.00" font-size="25.5" textLength="35.79" lengthAdjust="spacingAndGlyphs">20</text>
<text x="580.93" y="191.35" font-size="25.5" textLength="35.45" lengthAdjust="spacingAndGlyphs">30</text>
<text x="638.66" y="133.77" font-size="25.5" textLength="35.11" lengthAdjust="spacingAndGlyphs">40</text>
<text x="717.08" y="112.70" font-size="25.5" textLength="35.62" lengthAdjust="spacingAndGlyphs">50</text>
<text x="795.65" y="133.77" font-size="25.5" textLength="35.79" lengthAdjust="spacingAndGlyphs">60</text>
<text x="853.14" y="191.35" font-size="25.5" textLength="35.96" lengthAdjust="spacingAndGlyphs">70</text>
<text x="874.38" y="270.00" font-size="25.5" textLength="35.62" lengthAdjust="spacingAndGlyphs">80</text>
<text x="853.22" y="348.65" font-size="25.5" textLength="35.79" lengthAdjust="spacingAndGlyphs">90</text>
<text x="792.92" y="402.16" font-size="25.5" textLength="53.63" lengthAdjust="spacingAndGlyphs">100</text>
<text x="717.16" y="181.40" font-size="25.5" textLength="95.78" lengthAdjust="spacingAndGlyphs">Throttle</text>
<text x="716.81" y="211.40" font-size="25.5" textLength="99.95" lengthAdjust="spacingAndGlyphs">Position</text>
<text x="716.90" y="340.70" font-size="25.5" textLength="19.09" lengthAdjust="spacingAndGlyphs">0</text>
<text x="716.87" y="375.00" font-size="25.5" textLength="19.90" lengthAdjust="spacingAndGlyphs">%</text>
<use href="#needle" transform="translate(716.88 252.90) rotate(120.00)" fill="#000" opacity="0.32" filter="url(#blur)"/>
<use href="#needle" transform="translate(716.88 256.90) rotate(120.00)" fill="url(#ngrad)" opacity="0.88"/>
<circle cx="716.88" cy="256.90" r="30" fill="url(#hub)"/>
<g clip-path="url(#hubclip)" transform="translate(716.88 256.90)"><use href="#needle" transform="rotate(120.00)" fill="url(#nhl)"/></g>
</g>
<g>
<circle cx="1195.56" cy="256.90" r="235.7" fill="url(#bezel)" transform="translate(1195.56 256.90) scale(1) translate(-1195.56 -256.90)"/>
<use href="#facebg" x="1195.56" y="256.90"/>
<path d="M1097.16,427.33 A196.8,196.8 0 0 1 1064.48,403.69 L1074.13,392.88 A182.3,182.3 0 0 0 1104.41,414.78 Z" fill="#8a292a"/>
<path d="M1064.48,403.69 A196.8,196.8 0 0 1 1058.56,398.19 L1068.65,387.78 A182.3,182.3 0 0 0 1074.13,392.88 Z" fill="#8b8a28"/>
<path d="M1391.70,240.75 A196.8,196.8 0 0 1 1310.91,416.35 L1302.41,404.60 A182.3,182.3 0 0 0 1377.25,241.94 Z" fill="#8b8a28"/>
<path d="M1310.91,416.35 A196.8,196.8 0 0 1 1293.96,427.33 L1286.71,414.78 A182.3,182.3 0 0 0 1302.41,404.60 Z" fill="#8a292a"/>
<path d="M1095.56,430.11L1103.81,415.82M1034.73,375.78L1048.00,365.97M1000.64,301.69L1016.72,297.99M998.97,220.15L1015.18,223.18M1029.98,144.72L1043.64,153.98M1088.53,87.95L1097.36,101.89M1164.88,59.27L1167.41,75.57M1246.33,63.45L1242.14,79.41M1319.34,99.80L1309.13,112.77M1371.76,162.28L1357.23,170.09M1394.89,240.49L1378.44,241.85M1384.86,321.43L1369.25,316.11M1343.36,391.64L1331.17,380.52" stroke="#2b2b2b" stroke-width="3.8" fill="none"/>
<path d="M1082.83,419.67L1087.78,412.52M1069.85,409.88L1075.38,403.15M1057.73,399.05L1063.78,392.80M1046.53,387.26L1053.08,381.53M1027.22,361.13L1034.61,356.55M1019.23,346.97L1026.98,343.01M1012.44,332.20L1020.48,328.89M1006.88,316.92L1015.17,314.29M999.60,285.26L1008.21,284.02M997.94,269.09L1006.62,268.55M997.60,252.83L1006.30,253.01M998.60,236.61L1007.26,237.50M1004.57,204.67L1012.96,206.97M1009.50,189.18L1017.68,192.16M1015.68,174.14L1023.59,177.78M1023.08,159.67L1030.66,163.94M1041.30,132.77L1048.08,138.22M1052.01,120.53L1058.31,126.52M1063.68,109.21L1069.47,115.70M1076.24,98.89L1081.48,105.84M1103.68,81.51L1107.72,89.21M1118.38,74.56L1121.77,82.57M1133.60,68.84L1136.32,77.11M1149.24,64.39L1151.27,72.85M1181.34,59.41L1181.97,68.09M1197.59,58.91L1197.50,67.61M1213.83,59.74L1213.03,68.41M1229.94,61.91L1228.43,70.48M1261.37,70.16L1258.47,78.36M1276.47,76.18L1272.91,84.12M1291.02,83.43L1286.82,91.05M1304.93,91.85L1300.12,99.10M1330.45,111.95L1324.52,118.32M1341.88,123.51L1335.45,129.37M1352.33,135.96L1345.45,141.28M1361.73,149.23L1354.43,153.96M1377.10,177.85L1369.12,181.33M1382.97,193.01L1374.74,195.82M1387.58,208.61L1379.14,210.73M1390.89,224.52L1382.31,225.94M1393.56,256.90L1384.86,256.90M1392.89,273.14L1384.22,272.43M1390.89,289.28L1382.31,287.86M1387.58,305.19L1379.14,303.07M1377.10,335.95L1369.12,332.47M1370.00,350.57L1362.34,346.46M1361.73,364.57L1354.43,359.84M1352.33,377.84L1345.45,372.52M1330.45,401.85L1324.52,395.48M1318.10,412.42L1312.72,405.59M1304.93,421.95L1300.12,414.70" stroke="#2b2b2b" stroke-width="2.1" fill="none"/>
<text x="1114.58" y="410.30" font-size="25.5" textLength="19.09" lengthAdjust="spacingAndGlyphs">0</text>
<text x="1065.39" y="366.29" font-size="25.5" textLength="18.89" lengthAdjust="spacingAndGlyphs">2</text>
<text x="1037.54" y="306.28" font-size="25.5" textLength="16.95" lengthAdjust="spacingAndGlyphs">4</text>
<text x="1036.34" y="240.23" font-size="25.5" textLength="18.69" lengthAdjust="spacingAndGlyphs">6</text>
<text x="1061.46" y="179.14" font-size="25.5" textLength="18.31" lengthAdjust="spacingAndGlyphs">8</text>
<text x="1111.09" y="137.12" font-size="25.5" textLength="36.67" lengthAdjust="spacingAndGlyphs">10</text>
<text x="1171.14" y="114.56" font-size="25.5" textLength="36.67" lengthAdjust="spacingAndGlyphs">12</text>
<text x="1234.65" y="117.85" font-size="25.5" textLength="35.45" lengthAdjust="spacingAndGlyphs">14</text>
<text x="1292.54" y="146.44" font-size="25.5" textLength="36.49" lengthAdjust="spacingAndGlyphs">16</text>
<text x="1333.69" y="195.58" font-size="25.5" textLength="36.31" lengthAdjust="spacingAndGlyphs">18</text>
<text x="1352.45" y="257.09" font-size="25.5" textLength="35.79" lengthAdjust="spacingAndGlyphs">20</text>
<text x="1344.57" y="320.75" font-size="25.5" textLength="35.79" lengthAdjust="spacingAndGlyphs">22</text>
<text x="1311.38" y="375.97" font-size="25.5" textLength="34.62" lengthAdjust="spacingAndGlyphs">24</text>
<text x="1195.07" y="195.80" font-size="25.5" textLength="169.39" lengthAdjust="spacingAndGlyphs">Pulse Width 1</text>
<text x="1195.60" y="340.70" font-size="25.5" textLength="78.38" lengthAdjust="spacingAndGlyphs">0.000</text>
<text x="1195.11" y="375.00" font-size="25.5" textLength="75.80" lengthAdjust="spacingAndGlyphs">mSec</text>
<use href="#needle" transform="translate(1195.56 252.90) rotate(120.00)" fill="#000" opacity="0.32" filter="url(#blur)"/>
<use href="#needle" transform="translate(1195.56 256.90) rotate(120.00)" fill="url(#ngrad)" opacity="0.88"/>
<circle cx="1195.56" cy="256.90" r="30" fill="url(#hub)"/>
<g clip-path="url(#hubclip)" transform="translate(1195.56 256.90)"><use href="#needle" transform="rotate(120.00)" fill="url(#nhl)"/></g>
</g>
<g>
<circle cx="1674.24" cy="256.90" r="235.7" fill="url(#bezel)" transform="translate(1674.24 256.90) scale(1) translate(-1674.24 -256.90)"/>
<use href="#facebg" x="1674.24" y="256.90"/>
<path d="M1575.84,427.33 A196.8,196.8 0 0 1 1477.44,256.90 L1491.94,256.90 A182.3,182.3 0 0 0 1583.09,414.78 Z" fill="#8a292a"/>
<path d="M1477.44,256.90 A196.8,196.8 0 0 1 1503.81,158.50 L1516.36,165.75 A182.3,182.3 0 0 0 1491.94,256.90 Z" fill="#8b8a28"/>
<path d="M1844.67,158.50 A196.8,196.8 0 0 1 1871.04,256.90 L1856.54,256.90 A182.3,182.3 0 0 0 1832.12,165.75 Z" fill="#8b8a28"/>
<path d="M1871.04,256.90 A196.8,196.8 0 0 1 1772.64,427.33 L1765.39,414.78 A182.3,182.3 0 0 0 1856.54,256.90 Z" fill="#8a292a"/>
<path d="M1574.24,430.11L1582.49,415.82M1501.03,356.90L1515.32,348.65M1474.24,256.90L1490.74,256.90M1501.03,156.90L1515.32,165.15M1574.24,83.69L1582.49,97.98M1674.24,56.90L1674.24,73.40M1774.24,83.69L1765.99,97.98M1847.45,156.90L1833.16,165.15M1874.24,256.90L1857.74,256.90M1847.45,356.90L1833.16,348.65M1774.24,430.11L1765.99,415.82" stroke="#2b2b2b" stroke-width="3.8" fill="none"/>
<path d="M1557.86,417.09L1562.97,410.05M1541.75,404.04L1547.57,397.58M1527.10,389.39L1533.56,383.57M1514.05,373.28L1521.09,368.17M1493.36,337.43L1501.31,333.90M1485.93,318.09L1494.21,315.40M1480.57,298.07L1489.08,296.26M1477.32,277.60L1485.98,276.69M1477.32,236.20L1485.98,237.11M1480.57,215.73L1489.08,217.54M1485.93,195.71L1494.21,198.40M1493.36,176.37L1501.31,179.90M1514.05,140.52L1521.09,145.63M1527.10,124.41L1533.56,130.23M1541.75,109.76L1547.57,116.22M1557.86,96.71L1562.97,103.75M1593.71,76.02L1597.24,83.97M1613.05,68.59L1615.74,76.87M1633.07,63.23L1634.88,71.74M1653.54,59.98L1654.45,68.64M1694.94,59.98L1694.03,68.64M1715.41,63.23L1713.60,71.74M1735.43,68.59L1732.74,76.87M1754.77,76.02L1751.24,83.97M1790.62,96.71L1785.51,103.75M1806.73,109.76L1800.91,116.22M1821.38,124.41L1814.92,130.23M1834.43,140.52L1827.39,145.63M1855.12,176.37L1847.17,179.90M1862.55,195.71L1854.27,198.40M1867.91,215.73L1859.40,217.54M1871.16,236.20L1862.50,237.11M1871.16,277.60L1862.50,276.69M1867.91,298.07L1859.40,296.26M1862.55,318.09L1854.27,315.40M1855.12,337.43L1847.17,333.90M1834.43,373.28L1827.39,368.17M1821.38,389.39L1814.92,383.57M1806.73,404.04L1800.91,397.58M1790.62,417.09L1785.51,410.05" stroke="#2b2b2b" stroke-width="2.1" fill="none"/>
<text x="1597.94" y="402.16" font-size="25.5" textLength="44.36" lengthAdjust="spacingAndGlyphs">0.0</text>
<text x="1541.85" y="346.30" font-size="25.5" textLength="43.86" lengthAdjust="spacingAndGlyphs">0.1</text>
<text x="1521.64" y="270.00" font-size="25.5" textLength="44.36" lengthAdjust="spacingAndGlyphs">0.2</text>
<text x="1542.01" y="193.70" font-size="25.5" textLength="44.19" lengthAdjust="spacingAndGlyphs">0.3</text>
<text x="1597.40" y="137.84" font-size="25.5" textLength="43.20" lengthAdjust="spacingAndGlyphs">0.4</text>
<text x="1674.01" y="117.40" font-size="25.5" textLength="43.86" lengthAdjust="spacingAndGlyphs">0.5</text>
<text x="1750.46" y="137.84" font-size="25.5" textLength="44.19" lengthAdjust="spacingAndGlyphs">0.6</text>
<text x="1806.40" y="193.70" font-size="25.5" textLength="44.36" lengthAdjust="spacingAndGlyphs">0.7</text>
<text x="1826.68" y="270.00" font-size="25.5" textLength="44.02" lengthAdjust="spacingAndGlyphs">0.8</text>
<text x="1806.32" y="346.30" font-size="25.5" textLength="44.19" lengthAdjust="spacingAndGlyphs">0.9</text>
<text x="1750.22" y="402.16" font-size="25.5" textLength="45.05" lengthAdjust="spacingAndGlyphs">1.0</text>
<text x="1673.61" y="181.40" font-size="25.5" textLength="98.02" lengthAdjust="spacingAndGlyphs">Exhaust</text>
<text x="1674.50" y="211.40" font-size="25.5" textLength="143.18" lengthAdjust="spacingAndGlyphs">Gas Oxygen</text>
<text x="1674.26" y="340.70" font-size="25.5" textLength="61.36" lengthAdjust="spacingAndGlyphs">0.00</text>
<text x="1674.70" y="375.00" font-size="25.5" textLength="62.99" lengthAdjust="spacingAndGlyphs">volts</text>
<use href="#needle" transform="translate(1674.24 252.90) rotate(120.00)" fill="#000" opacity="0.32" filter="url(#blur)"/>
<use href="#needle" transform="translate(1674.24 256.90) rotate(120.00)" fill="url(#ngrad)" opacity="0.88"/>
<circle cx="1674.24" cy="256.90" r="30" fill="url(#hub)"/>
<g clip-path="url(#hubclip)" transform="translate(1674.24 256.90)"><use href="#needle" transform="rotate(120.00)" fill="url(#nhl)"/></g>
</g>
<g>
<circle cx="238.20" cy="764.00" r="235.7" fill="url(#bezel)" transform="translate(238.20 764.00) scale(1) translate(-238.20 -764.00)"/>
<use href="#facebg" x="238.20" y="764.00"/>
<path d="M139.80,934.43 A196.8,196.8 0 0 1 79.94,880.98 L91.60,872.36 A182.3,182.3 0 0 0 147.05,921.88 Z" fill="#8b8a28"/>
<path d="M434.34,747.85 A196.8,196.8 0 0 1 369.28,910.79 L359.63,899.98 A182.3,182.3 0 0 0 419.89,749.04 Z" fill="#8b8a28"/>
<path d="M369.28,910.79 A196.8,196.8 0 0 1 336.60,934.43 L329.35,921.88 A182.3,182.3 0 0 0 359.63,899.98 Z" fill="#8a292a"/>
<path d="M138.20,937.21L146.45,922.92M77.37,882.88L90.64,873.07M43.28,808.79L59.36,805.09M41.61,727.25L57.82,730.28M72.62,651.82L86.28,661.08M131.17,595.05L140.00,608.99M207.52,566.37L210.05,582.67M288.97,570.55L284.78,586.51M361.98,606.90L351.77,619.87M414.40,669.38L399.87,677.19M437.53,747.59L421.08,748.95M427.50,828.53L411.89,823.21M386.00,898.74L373.81,887.62" stroke="#2b2b2b" stroke-width="3.8" fill="none"/>
<path d="M125.47,926.77L130.42,919.62M112.49,916.98L118.02,910.25M100.37,906.15L106.42,899.90M89.17,894.36L95.72,888.63M69.86,868.23L77.25,863.65M61.87,854.07L69.62,850.11M55.08,839.30L63.12,835.99M49.52,824.02L57.81,821.39M42.24,792.36L50.85,791.12M40.58,776.19L49.26,775.65M40.24,759.93L48.94,760.11M41.24,743.71L49.90,744.60M47.21,711.77L55.60,714.07M52.14,696.28L60.32,699.26M58.32,681.24L66.23,684.88M65.72,666.77L73.30,671.04M83.94,639.87L90.72,645.32M94.65,627.63L100.95,633.62M106.32,616.31L112.11,622.80M118.88,605.99L124.12,612.94M146.32,588.61L150.36,596.31M161.02,581.66L164.41,589.67M176.24,575.94L178.96,584.21M191.88,571.49L193.91,579.95M223.98,566.51L224.61,575.19M240.23,566.01L240.14,574.71M256.47,566.84L255.67,575.51M272.58,569.01L271.07,577.58M304.01,577.26L301.11,585.46M319.11,583.28L315.55,591.22M333.66,590.53L329.46,598.15M347.57,598.95L342.76,606.20M373.09,619.05L367.16,625.42M384.52,630.61L378.09,636.47M394.97,643.06L388.09,648.38M404.37,656.33L397.07,661.06M419.74,684.95L411.76,688.43M425.61,700.11L417.38,702.92M430.22,715.71L421.78,717.83M433.53,731.62L424.95,733.04M436.20,764.00L427.50,764.00M435.53,780.24L426.86,779.53M433.53,796.38L424.95,794.96M430.22,812.29L421.78,810.17M419.74,843.05L411.76,839.57M412.64,857.67L404.98,853.56M404.37,871.67L397.07,866.94M394.97,884.94L388.09,879.62M373.09,908.95L367.16,902.58M360.74,919.52L355.36,912.69M347.57,929.05L342.76,921.80" stroke="#2b2b2b" stroke-width="2.1" fill="none"/>
<text x="157.22" y="917.40" font-size="25.5" textLength="19.09" lengthAdjust="spacingAndGlyphs">0</text>
<text x="111.82" y="870.60" font-size="25.5" textLength="35.79" lengthAdjust="spacingAndGlyphs">20</text>
<text x="85.33" y="812.33" font-size="25.5" textLength="35.11" lengthAdjust="spacingAndGlyphs">40</text>
<text x="83.70" y="748.20" font-size="25.5" textLength="35.79" lengthAdjust="spacingAndGlyphs">60</text>
<text x="108.17" y="688.87" font-size="25.5" textLength="35.62" lengthAdjust="spacingAndGlyphs">80</text>
<text x="156.27" y="648.19" font-size="25.5" textLength="53.63" lengthAdjust="spacingAndGlyphs">100</text>
<text x="214.53" y="626.31" font-size="25.5" textLength="53.63" lengthAdjust="spacingAndGlyphs">120</text>
<text x="276.67" y="629.50" font-size="25.5" textLength="53.63" lengthAdjust="spacingAndGlyphs">140</text>
<text x="332.38" y="657.24" font-size="25.5" textLength="53.63" lengthAdjust="spacingAndGlyphs">160</text>
<text x="372.38" y="704.91" font-size="25.5" textLength="53.63" lengthAdjust="spacingAndGlyphs">180</text>
<text x="390.42" y="764.58" font-size="25.5" textLength="52.78" lengthAdjust="spacingAndGlyphs">200</text>
<text x="382.77" y="826.34" font-size="25.5" textLength="52.78" lengthAdjust="spacingAndGlyphs">220</text>
<text x="351.11" y="879.91" font-size="25.5" textLength="52.78" lengthAdjust="spacingAndGlyphs">240</text>
<text x="237.80" y="702.90" font-size="25.5" textLength="147.70" lengthAdjust="spacingAndGlyphs">Engine MAP</text>
<text x="238.20" y="847.80" font-size="25.5" textLength="44.36" lengthAdjust="spacingAndGlyphs">0.0</text>
<text x="237.05" y="882.10" font-size="25.5" textLength="50.90" lengthAdjust="spacingAndGlyphs">kPa</text>
<use href="#needle" transform="translate(238.20 760.00) rotate(120.00)" fill="#000" opacity="0.32" filter="url(#blur)"/>
<use href="#needle" transform="translate(238.20 764.00) rotate(120.00)" fill="url(#ngrad)" opacity="0.88"/>
<circle cx="238.20" cy="764.00" r="30" fill="url(#hub)"/>
<g clip-path="url(#hubclip)" transform="translate(238.20 764.00)"><use href="#needle" transform="rotate(120.00)" fill="url(#nhl)"/></g>
</g>
<g>
<circle cx="716.88" cy="764.00" r="235.7" fill="url(#bezel)" transform="translate(716.88 764.00) scale(1) translate(-716.88 -764.00)"/>
<use href="#facebg" x="716.88" y="764.00"/>
<path d="M618.48,934.43 A196.8,196.8 0 0 1 525.08,808.07 L539.21,804.83 A182.3,182.3 0 0 0 625.73,921.88 Z" fill="#8a292a"/>
<path d="M525.08,808.07 A196.8,196.8 0 0 1 534.87,689.15 L548.28,694.67 A182.3,182.3 0 0 0 539.21,804.83 Z" fill="#8b8a28"/>
<path d="M862.32,896.58 A196.8,196.8 0 0 1 832.23,923.45 L823.73,911.70 A182.3,182.3 0 0 0 851.60,886.81 Z" fill="#8b8a28"/>
<path d="M832.23,923.45 A196.8,196.8 0 0 1 815.28,934.43 L808.03,921.88 A182.3,182.3 0 0 0 823.73,911.70 Z" fill="#8a292a"/>
<path d="M616.88,937.21L625.13,922.92M556.05,882.88L569.32,873.07M521.96,808.79L538.04,805.09M520.29,727.25L536.50,730.28M551.30,651.82L564.96,661.08M609.85,595.05L618.68,608.99M686.20,566.37L688.73,582.67M767.65,570.55L763.46,586.51M840.66,606.90L830.45,619.87M893.08,669.38L878.55,677.19M916.21,747.59L899.76,748.95M906.18,828.53L890.57,823.21M864.68,898.74L852.49,887.62" stroke="#2b2b2b" stroke-width="3.8" fill="none"/>
<path d="M604.15,926.77L609.10,919.62M591.17,916.98L596.70,910.25M579.05,906.15L585.10,899.90M567.85,894.36L574.40,888.63M548.54,868.23L555.93,863.65M540.55,854.07L548.30,850.11M533.76,839.30L541.80,835.99M528.20,824.02L536.49,821.39M520.92,792.36L529.53,791.12M519.26,776.19L527.94,775.65M518.92,759.93L527.62,760.11M519.92,743.71L528.58,744.60M525.89,711.77L534.28,714.07M530.82,696.28L539.00,699.26M537.00,681.24L544.91,684.88M544.40,666.77L551.98,671.04M562.62,639.87L569.40,645.32M573.33,627.63L579.63,633.62M585.00,616.31L590.79,622.80M597.56,605.99L602.80,612.94M625.00,588.61L629.04,596.31M639.70,581.66L643.09,589.67M654.92,575.94L657.64,584.21M670.56,571.49L672.59,579.95M702.66,566.51L703.29,575.19M718.91,566.01L718.82,574.71M735.15,566.84L734.35,575.51M751.26,569.01L749.75,577.58M782.69,577.26L779.79,585.46M797.79,583.28L794.23,591.22M812.34,590.53L808.14,598.15M826.25,598.95L821.44,606.20M851.77,619.05L845.84,625.42M863.20,630.61L856.77,636.47M873.65,643.06L866.77,648.38M883.05,656.33L875.75,661.06M898.42,684.95L890.44,688.43M904.29,700.11L896.06,702.92M908.90,715.71L900.46,717.83M912.21,731.62L903.63,733.04M914.88,764.00L906.18,764.00M914.21,780.24L905.54,779.53M912.21,796.38L903.63,794.96M908.90,812.29L900.46,810.17M898.42,843.05L890.44,839.57M891.32,857.67L883.66,853.56M883.05,871.67L875.75,866.94M873.65,884.94L866.77,879.62M851.77,908.95L845.84,902.58M839.42,919.52L834.04,912.69M826.25,929.05L821.44,921.80" stroke="#2b2b2b" stroke-width="2.1" fill="none"/>
<text x="640.59" y="909.26" font-size="25.5" textLength="45.32" lengthAdjust="spacingAndGlyphs">-40</text>
<text x="594.17" y="867.81" font-size="25.5" textLength="45.32" lengthAdjust="spacingAndGlyphs">-20</text>
<text x="559.01" y="813.38" font-size="25.5" textLength="19.09" lengthAdjust="spacingAndGlyphs">0</text>
<text x="562.38" y="748.20" font-size="25.5" textLength="35.79" lengthAdjust="spacingAndGlyphs">20</text>
<text x="587.08" y="688.87" font-size="25.5" textLength="35.11" lengthAdjust="spacingAndGlyphs">40</text>
<text x="632.82" y="644.22" font-size="25.5" textLength="35.79" lengthAdjust="spacingAndGlyphs">60</text>
<text x="692.95" y="621.66" font-size="25.5" textLength="35.62" lengthAdjust="spacingAndGlyphs">80</text>
<text x="755.35" y="629.50" font-size="25.5" textLength="53.63" lengthAdjust="spacingAndGlyphs">100</text>
<text x="811.06" y="657.24" font-size="25.5" textLength="53.63" lengthAdjust="spacingAndGlyphs">120</text>
<text x="851.06" y="704.91" font-size="25.5" textLength="53.63" lengthAdjust="spacingAndGlyphs">140</text>
<text x="868.70" y="764.58" font-size="25.5" textLength="53.63" lengthAdjust="spacingAndGlyphs">160</text>
<text x="861.05" y="826.34" font-size="25.5" textLength="53.63" lengthAdjust="spacingAndGlyphs">180</text>
<text x="829.79" y="879.91" font-size="25.5" textLength="52.78" lengthAdjust="spacingAndGlyphs">200</text>
<text x="716.41" y="688.50" font-size="25.5" textLength="78.59" lengthAdjust="spacingAndGlyphs">Intake</text>
<text x="717.07" y="718.50" font-size="25.5" textLength="108.04" lengthAdjust="spacingAndGlyphs">Air Temp</text>
<text x="716.90" y="847.80" font-size="25.5" textLength="19.09" lengthAdjust="spacingAndGlyphs">0</text>
<text x="716.73" y="882.10" font-size="25.5" textLength="33.15" lengthAdjust="spacingAndGlyphs">°F</text>
<use href="#needle" transform="translate(716.88 760.00) rotate(167.06)" fill="#000" opacity="0.32" filter="url(#blur)"/>
<use href="#needle" transform="translate(716.88 764.00) rotate(167.06)" fill="url(#ngrad)" opacity="0.88"/>
<circle cx="716.88" cy="764.00" r="30" fill="url(#hub)"/>
<g clip-path="url(#hubclip)" transform="translate(716.88 764.00)"><use href="#needle" transform="rotate(167.06)" fill="url(#nhl)"/></g>
</g>
<g>
<circle cx="1195.56" cy="764.00" r="235.7" fill="url(#bezel)" transform="translate(1195.56 764.00) scale(1) translate(-1195.56 -764.00)"/>
<use href="#facebg" x="1195.56" y="764.00"/>
<path d="M1097.16,934.43 A196.8,196.8 0 0 1 998.76,764.00 L1013.26,764.00 A182.3,182.3 0 0 0 1104.41,921.88 Z" fill="#8a292a"/>
<path d="M998.76,764.00 A196.8,196.8 0 0 1 1056.40,624.84 L1066.65,635.09 A182.3,182.3 0 0 0 1013.26,764.00 Z" fill="#8b8a28"/>
<path d="M1334.72,624.84 A196.8,196.8 0 0 1 1392.36,764.00 L1377.86,764.00 A182.3,182.3 0 0 0 1324.47,635.09 Z" fill="#8b8a28"/>
<path d="M1392.36,764.00 A196.8,196.8 0 0 1 1293.96,934.43 L1286.71,921.88 A182.3,182.3 0 0 0 1377.86,764.00 Z" fill="#8a292a"/>
<path d="M1095.56,937.21L1103.81,922.92M1022.35,864.00L1036.64,855.75M995.56,764.00L1012.06,764.00M1022.35,664.00L1036.64,672.25M1095.56,590.79L1103.81,605.08M1195.56,564.00L1195.56,580.50M1295.56,590.79L1287.31,605.08M1368.77,664.00L1354.48,672.25M1395.56,764.00L1379.06,764.00M1368.77,864.00L1354.48,855.75M1295.56,937.21L1287.31,922.92" stroke="#2b2b2b" stroke-width="3.8" fill="none"/>
<path d="M1079.18,924.19L1084.29,917.15M1063.07,911.14L1068.89,904.68M1048.42,896.49L1054.88,890.67M1035.37,880.38L1042.41,875.27M1014.68,844.53L1022.63,841.00M1007.25,825.19L1015.53,822.50M1001.89,805.17L1010.40,803.36M998.64,784.70L1007.30,783.79M998.64,743.30L1007.30,744.21M1001.89,722.83L1010.40,724.64M1007.25,702.81L1015.53,705.50M1014.68,683.47L1022.63,687.00M1035.37,647.62L1042.41,652.73M1048.42,631.51L1054.88,637.33M1063.07,616.86L1068.89,623.32M1079.18,603.81L1084.29,610.85M1115.03,583.12L1118.56,591.07M1134.37,575.69L1137.06,583.97M1154.39,570.33L1156.20,578.84M1174.86,567.08L1175.77,575.74M1216.26,567.08L1215.35,575.74M1236.73,570.33L1234.92,578.84M1256.75,575.69L1254.06,583.97M1276.09,583.12L1272.56,591.07M1311.94,603.81L1306.83,610.85M1328.05,616.86L1322.23,623.32M1342.70,631.51L1336.24,637.33M1355.75,647.62L1348.71,652.73M1376.44,683.47L1368.49,687.00M1383.87,702.81L1375.59,705.50M1389.23,722.83L1380.72,724.64M1392.48,743.30L1383.82,744.21M1392.48,784.70L1383.82,783.79M1389.23,805.17L1380.72,803.36M1383.87,825.19L1375.59,822.50M1376.44,844.53L1368.49,841.00M1355.75,880.38L1348.71,875.27M1342.70,896.49L1336.24,890.67M1328.05,911.14L1322.23,904.68M1311.94,924.19L1306.83,917.15" stroke="#2b2b2b" stroke-width="2.1" fill="none"/>
<text x="1114.58" y="917.40" font-size="25.5" textLength="19.09" lengthAdjust="spacingAndGlyphs">0</text>
<text x="1059.45" y="855.75" font-size="25.5" textLength="35.79" lengthAdjust="spacingAndGlyphs">20</text>
<text x="1038.69" y="777.10" font-size="25.5" textLength="35.11" lengthAdjust="spacingAndGlyphs">40</text>
<text x="1059.45" y="698.45" font-size="25.5" textLength="35.79" lengthAdjust="spacingAndGlyphs">60</text>
<text x="1117.11" y="640.87" font-size="25.5" textLength="35.62" lengthAdjust="spacingAndGlyphs">80</text>
<text x="1195.30" y="624.50" font-size="25.5" textLength="53.63" lengthAdjust="spacingAndGlyphs">100</text>
<text x="1271.60" y="644.94" font-size="25.5" textLength="53.63" lengthAdjust="spacingAndGlyphs">120</text>
<text x="1327.45" y="700.80" font-size="25.5" textLength="53.63" lengthAdjust="spacingAndGlyphs">140</text>
<text x="1347.90" y="777.10" font-size="25.5" textLength="53.63" lengthAdjust="spacingAndGlyphs">160</text>
<text x="1327.45" y="853.40" font-size="25.5" textLength="53.63" lengthAdjust="spacingAndGlyphs">180</text>
<text x="1271.99" y="909.26" font-size="25.5" textLength="52.78" lengthAdjust="spacingAndGlyphs">200</text>
<text x="1196.24" y="688.50" font-size="25.5" textLength="68.67" lengthAdjust="spacingAndGlyphs">X-Tau</text>
<text x="1195.40" y="718.50" font-size="25.5" textLength="146.56" lengthAdjust="spacingAndGlyphs">Correction1</text>
<text x="1195.58" y="847.80" font-size="25.5" textLength="19.09" lengthAdjust="spacingAndGlyphs">0</text>
<text x="1195.55" y="882.10" font-size="25.5" textLength="19.90" lengthAdjust="spacingAndGlyphs">%</text>
<use href="#needle" transform="translate(1195.56 760.00) rotate(120.00)" fill="#000" opacity="0.32" filter="url(#blur)"/>
<use href="#needle" transform="translate(1195.56 764.00) rotate(120.00)" fill="url(#ngrad)" opacity="0.88"/>
<circle cx="1195.56" cy="764.00" r="30" fill="url(#hub)"/>
<g clip-path="url(#hubclip)" transform="translate(1195.56 764.00)"><use href="#needle" transform="rotate(120.00)" fill="url(#nhl)"/></g>
</g>
<g>
<circle cx="1674.24" cy="764.00" r="235.7" fill="url(#bezel)" transform="translate(1674.24 764.00) scale(1) translate(-1674.24 -764.00)"/>
<use href="#facebg" x="1674.24" y="764.00"/>
<path d="M1574.24,937.21L1582.49,922.92M1475.59,740.78L1491.98,742.70M1616.88,572.40L1621.61,588.21M1827.45,635.44L1814.81,646.05M1852.97,853.76L1838.22,846.35" stroke="#2b2b2b" stroke-width="3.8" fill="none"/>
<path d="M1530.22,899.88L1536.55,893.91M1497.30,852.86L1505.08,848.96M1479.25,798.38L1487.82,796.87M1492.43,685.58L1500.42,689.02M1522.56,636.73L1529.23,642.32M1565.44,598.57L1570.22,605.84M1674.24,566.00L1674.24,574.70M1731.03,574.32L1728.53,582.65M1783.04,598.57L1778.26,605.84M1856.05,685.58L1848.06,689.02M1870.90,741.01L1862.26,742.02M1869.23,798.38L1860.66,796.87M1818.26,899.88L1811.93,893.91M1773.24,935.47L1768.89,927.94" stroke="#2b2b2b" stroke-width="2.1" fill="none"/>
<text x="1593.18" y="917.40" font-size="25.5" textLength="18.13" lengthAdjust="spacingAndGlyphs">5</text>
<text x="1517.47" y="758.84" font-size="25.5" textLength="36.14" lengthAdjust="spacingAndGlyphs">15</text>
<text x="1629.00" y="626.41" font-size="25.5" textLength="35.28" lengthAdjust="spacingAndGlyphs">25</text>
<text x="1794.78" y="675.99" font-size="25.5" textLength="34.94" lengthAdjust="spacingAndGlyphs">35</text>
<text x="1815.00" y="847.70" font-size="25.5" textLength="34.62" lengthAdjust="spacingAndGlyphs">45</text>
<text x="1674.17" y="688.50" font-size="25.5" textLength="92.92" lengthAdjust="spacingAndGlyphs">Ignition</text>
<text x="1674.35" y="718.50" font-size="25.5" textLength="103.76" lengthAdjust="spacingAndGlyphs">Advance</text>
<text x="1674.40" y="847.80" font-size="25.5" textLength="44.02" lengthAdjust="spacingAndGlyphs">5.0</text>
<text x="1674.25" y="882.10" font-size="25.5" textLength="106.54" lengthAdjust="spacingAndGlyphs">degrees</text>
<use href="#needle" transform="translate(1674.24 760.00) rotate(120.00)" fill="#000" opacity="0.32" filter="url(#blur)"/>
<use href="#needle" transform="translate(1674.24 764.00) rotate(120.00)" fill="url(#ngrad)" opacity="0.88"/>
<circle cx="1674.24" cy="764.00" r="30" fill="url(#hub)"/>
<g clip-path="url(#hubclip)" transform="translate(1674.24 764.00)"><use href="#needle" transform="rotate(120.00)" fill="url(#nhl)"/></g>
</g>
</svg>
<div class="abs" style="left:851px;top:90.8px;width:212.3px;height:54.1px;background:rgba(206,206,206,.96);color:#0b0b20;font-weight:bold;font-size:27.2px;line-height:54.1px;text-align:center;white-space:nowrap"><span style="position:relative;top:0.5px;left:-0.5px">Not Connected</span></div>
</div>
<div class="abs ind" style="left:2.0px;background:#8a2929;border-color:#8a2929 #7a2424 #7a2424 #8a2929;color:#2a2c2c;">SET ECU!!</div>
<div class="abs ind" style="left:149.3px;font-size:23.2px;line-height:26px;">Not Cranking</div>
<div class="abs ind" style="left:296.6px;">ASE off</div>
<div class="abs ind" style="left:443.9px;">WUE off</div>
<div class="abs ind" style="left:591.2px;">Accel Enrich</div>
<div class="abs ind" style="left:738.5px;">Decel Cut</div>
<div class="abs ind" style="left:885.8px;font-size:14px;">Flood clear off</div>
<div class="abs ind" style="left:1033.1px;background:#2b8a2b;border-color:#2b8a2b #257825 #257825 #2b8a2b;color:#2a2a2a;font-size:22.9px;line-height:26px;">Battery OK</div>
<div class="abs ind" style="left:1180.4px;">Port 0 Off</div>
<div class="abs ind dis" style="left:1327.7px;font-size:23.1px;line-height:26px;">Data Logging</div>
<div class="abs ind dis" style="left:1475.0px;"></div>
<div class="abs ind dis" style="left:1622.3px;font-size:19.9px;line-height:26px;">Not Connected</div>
<div class="abs ind dis" style="left:1769.6px;font-size:22.3px;line-height:26px;">Protocol Error</div>
<div class="abs" style="left:0;top:1164px;width:1917px;height:34px;background:#eeeeee"></div>
<div class="abs sb" style="left:0;width:481px;border-left:none"><span class="abs" style="left:1px;top:5px;font-weight:bold">MyCar Ready</span></div>
<div class="abs" style="left:483px;top:1176px;width:695px;height:20px;border:1px solid #8a8a8a;background:#fff"><div class="abs" style="left:2px;top:2px;right:1px;bottom:2px;background:#0a84ff"></div></div>
<div class="abs sb" style="left:1181px;width:206px"><span class="abs" style="left:9px;top:5px">AFR Table Generator</span><span class="abs" style="left:134px;top:5px;color:#0000cc;text-decoration:underline">Learn More!</span></div>
<div class="abs sb" style="left:1388px;width:484px"></div>
<div class="abs sb" style="left:1872px;width:25px"></div>
<svg class="abs" style="left:1873px;top:1175px" width="22" height="22" viewBox="0 0 22 22">
<rect x="4" y="6.6" width="14" height="8" rx="3.6" fill="#808080"/><circle cx="6.6" cy="10.8" r="3" fill="#640000"/><circle cx="15.4" cy="10.2" r="3.1" fill="#006400"/>
<circle cx="10.9" cy="10.9" r="8" fill="none" stroke="#ff0000" stroke-width="1.7"/><path d="M5,5.4L16.8,16.6" stroke="#ff0000" stroke-width="1.8"/></svg>
<svg class="abs" style="left:1903px;top:1181px" width="14" height="14" viewBox="0 0 14 14" fill="#9c9c9c"><rect x="11" y="2" width="1.2" height="1.2"/><rect x="7" y="6" width="1.2" height="1.2"/><rect x="11" y="6" width="1.2" height="1.2"/><rect x="3" y="10" width="1.2" height="1.2"/><rect x="7" y="10" width="1.2" height="1.2"/><rect x="11" y="10" width="1.2" height="1.2"/></svg>
<div class="abs" style="left:388px;top:1197px;width:1529px;height:1px;background:#444"></div>
<div class="abs" style="left:0;top:1197px;width:45px;height:1px;background:#444"></div>
</body></html>
